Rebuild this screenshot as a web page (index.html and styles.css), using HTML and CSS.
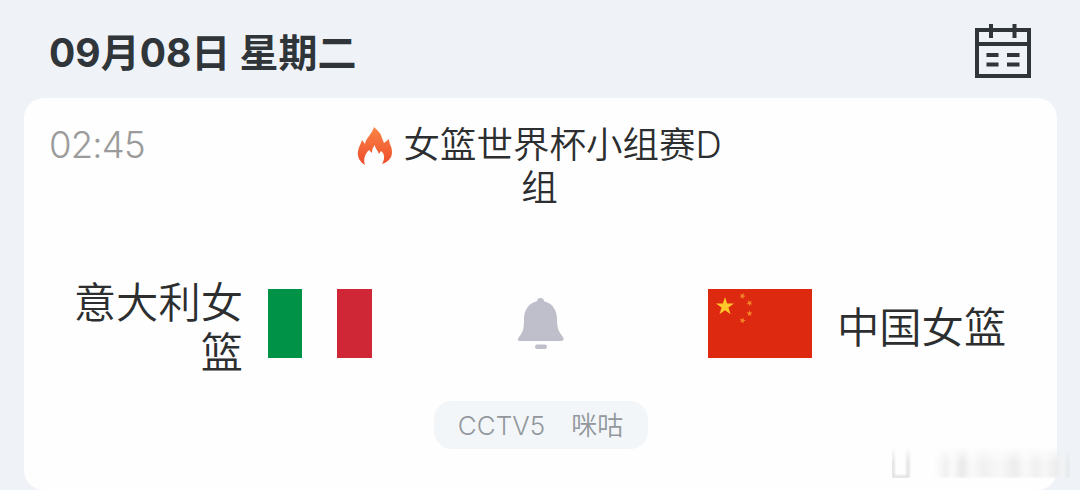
FILE: index.html
```html
<!DOCTYPE html>
<html lang="zh">
<head>
    <meta charset="UTF-8">
    <meta name="viewport" content="width=device-width, initial-scale=1.0">
    <title>赛程</title>
    <link rel="stylesheet" href="styles.css">
</head>
<body>
    <div class="header">
        <h1>09月08日 星期二</h1>
        <svg class="calendar-icon" viewBox="0 0 56 54" fill="none" stroke="#303539" stroke-width="4">
            <rect x="2" y="6" width="52" height="46"/>
            <path d="M2 20H54"/>
            <path d="M16 0V14M39.500 0V14"/>
            <path d="M11.500 31H23.500M32 31H44.500M11.500 40.500H23.500M32 40.500H44.500"/>
        </svg>
    </div>

    <div class="match-card">
        <div class="match-top">
            <div class="match-time">02:45</div>
            <div class="match-title">
                <svg class="fire-icon" viewBox="0 0 36 40">
                    <defs>
                        <linearGradient id="fire" x1="0" y1="0" x2="0" y2="1">
                            <stop offset="0" stop-color="#f98545"/>
                            <stop offset="1" stop-color="#ef4b2c"/>
                        </linearGradient>
                    </defs>
                    <path fill="url(#fire)" d="M8 39C3 36 0 31 1 25C1.500 21 4 18 5 14L8 18C9 12 15 8 17 1C20 4 24 7 25 12L27 17L32 13C32 18 35 20 35 26C35 32 31 36 25 38C28 33 28 28 24 25L22 28C21 24 18 23 18 19C16 21 15 23 15 27L12 24C8 28 6 33 8 39Z"/>
                </svg>
                女篮世界杯小组赛D<br>组
            </div>
        </div>

        <div class="match-teams">
            <div class="team team-home">
                <div class="team-name">意大利女<br>篮</div>
                <div class="flag flag-italy"></div>
            </div>
            <svg class="bell-icon" viewBox="0 0 48 52" fill="#bfbfcb">
                <circle cx="23.500" cy="3.500" r="3.500"/>
                <path d="M23.500 3C34 3 40 11 40 21C40 31 42 34 46 39Q48 43 44 43H3Q-1 43 2 39C6 34 7 31 7 21C7 11 13 3 23.500 3Z"/>
                <rect x="18" y="46.500" width="12" height="4.500" rx="2.200"/>
            </svg>
            <div class="team team-away">
                <svg class="flag" viewBox="0 0 104 69">
                    <defs>
                        <path id="star" d="M0-1L.225-.309H.951L.363.118L.588.809L0 .382L-.588.809L-.363.118L-.951-.309H-.225Z"/>
                    </defs>
                    <rect width="104" height="69" fill="#dc2910"/>
                    <g fill="#ffc72a">
                        <use href="#star" transform="translate(17 17.500) scale(9.500)"/>
                        <g fill="#f48a2a">
                            <use href="#star" transform="translate(34.500 7) rotate(23) scale(3.300)"/>
                            <use href="#star" transform="translate(41.500 14) rotate(46) scale(3.300)"/>
                            <use href="#star" transform="translate(41.500 24.500) scale(3.300)"/>
                            <use href="#star" transform="translate(34.500 31.500) rotate(20) scale(3.300)"/>
                        </g>
                    </g>
                </svg>
                <div class="team-name">中国女篮</div>
            </div>
        </div>

        <div class="channels">
            <span>CCTV5</span>
            <span>咪咕</span>
        </div>
    </div>

    <div class="smudge">
        <i class="smudge-box"></i>
        <i class="smudge-bars"></i>
    </div>
</body>
</html>
```
FILE: styles.css
```css
:root {
    --bg-color: #eff3f8;
    --card-color: #fefefe;
    --text-color: #2c2e30;
    --muted-color: #9b9b9b;
}

* {
    margin: 0;
    padding: 0;
    box-sizing: border-box;
}

body {
    height: 490px;
    overflow: hidden;
    position: relative;
    font-family: Inter, "Noto Sans CJK SC", sans-serif;
    background-color: var(--bg-color);
    color: var(--text-color);
}

.header {
    height: 98px;
    padding: 25px 49px 0 49px;
    display: flex;
    justify-content: space-between;
    align-items: flex-start;
}

.header h1 {
    font-size: 39px;
    line-height: 56px;
    font-weight: 700;
    color: #303539;
    white-space: nowrap;
}

.calendar-icon {
    width: 56px;
    height: 54px;
    margin-top: -1px;
}

.match-card {
    height: 392px;
    margin: 0 23px 0 24px;
    padding: 24px 25px 0 25px;
    background-color: var(--card-color);
    border-radius: 20px;
}

.match-top {
    height: 90px;
    display: grid;
    grid-template-columns: 200px 1fr 200px;
}

.match-time {
    padding-top: 1px;
    font-size: 36.5px;
    line-height: 44px;
    font-weight: 300;
    letter-spacing: -0.8px;
    color: var(--muted-color);
}

.match-title {
    padding-top: 2px;
    padding-right: 2px;
    font-size: 36.5px;
    line-height: 43px;
    font-weight: 350;
    text-align: center;
    white-space: nowrap;
}

.fire-icon {
    width: 36px;
    height: 40px;
    vertical-align: -8px;
}

.match-teams {
    height: 180px;
    padding-top: 43px;
    display: grid;
    grid-template-columns: 323px 1fr 323px;
    align-items: center;
    justify-items: center;
}

.team {
    width: 323px;
    display: flex;
    align-items: center;
    gap: 26px;
}

.team-home {
    justify-content: flex-end;
    text-align: right;
}

.team-away {
    margin-left: -2px;
    gap: 25px;
}

.team-name {
    padding-top: 8px;
    font-size: 42.3px;
    line-height: 50px;
    font-weight: 350;
    white-space: nowrap;
}

.team-home .team-name {
    margin-right: -1px;
}

.flag {
    width: 104px;
    height: 69px;
    flex-shrink: 0;
}

.flag-italy {
    background: linear-gradient(to right, #009347 0 34px, #fefefe 34px 69px, #cf2735 69px);
}

.bell-icon {
    width: 48px;
    height: 52px;
}

.channels {
    width: 214px;
    height: 48px;
    margin: 9px auto 0;
    padding-top: 1px;
    display: flex;
    justify-content: center;
    align-items: center;
    gap: 26px;
    font-size: 26px;
    line-height: 48px;
    font-weight: 350;
    color: #92989d;
    background-color: #f3f6f9;
    border-radius: 18px;
}

.smudge {
    position: absolute;
    left: 892px;
    top: 447px;
    width: 178px;
    height: 31px;
    display: flex;
    gap: 26px;
    filter: blur(1.5px);
    mask-image: linear-gradient(to bottom, transparent, #000 50%);
}

.smudge-box {
    width: 17px;
    border: 2px solid #d0d0d0;
    border-top: none;
}

.smudge-bars {
    flex: 1;
    background: linear-gradient(to right, transparent, #f0f0f0 8%, #fbfbfb 13%, #e8e8e8 20%, #fafafa 27%, #f0f0f0 36%, #f8f8f8 48%, #ececec 59%, #f9f9f9 67%, #f0f0f0 75%, #f7f7f7 82%, #ebeced 90%, #f2f4f6 95%, #e2e5e7);
}
```
